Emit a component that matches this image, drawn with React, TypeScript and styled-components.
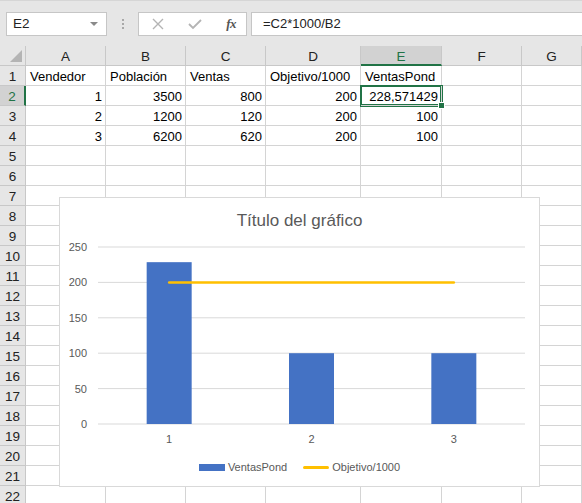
import React from 'react';
import styled, { createGlobalStyle } from 'styled-components';

const GlobalStyle = createGlobalStyle`
	html, body {
		margin: 0;
		padding: 0;
		background: #ffffff;
		overflow: hidden;
	}
	body {
		font-family: 'Liberation Sans', Arial, sans-serif;
	}
`;

const columnas = ['A', 'B', 'C', 'D', 'E', 'F', 'G'];
const filas: (string | number)[][] = [
	['Vendedor', 'Población', 'Ventas', 'Objetivo/1000', 'VentasPond', '', ''],
	[1, 3500, 800, 200, '228,571429', '', ''],
	[2, 1200, 120, 200, 100, '', ''],
	[3, 6200, 620, 200, 100, '', ''],
];
const totalFilas = 22;

// datos del grafico
const ventasPond = [228.571429, 100, 100];
const objetivo = 200;

const Page = styled.div`
	width: 582px;
	height: 503px;
	overflow: hidden;
	background: #ffffff;
`;

const Toolbar = styled.div`
	height: 46px;
	background: #e6e6e6;
	border-top: 1px solid #d6d6d6;
	box-sizing: border-box;
	display: flex;
	align-items: center;
	padding-left: 6px;
`;

const NameBox = styled.div`
	width: 101px;
	height: 24px;
	box-sizing: border-box;
	background: #ffffff;
	border: 1px solid #c6c6c6;
	display: flex;
	align-items: center;
	justify-content: space-between;
	padding: 0 6px 0 6px;
	font-size: 13.5px;
	color: #222;
`;

const DropArrow = styled.span`
	width: 0;
	height: 0;
	border-left: 4px solid transparent;
	border-right: 4px solid transparent;
	border-top: 4px solid #8a8a8a;
	margin-right: 2px;
`;

const Dots = styled.div`
	width: 31px;
	display: flex;
	flex-direction: column;
	align-items: center;
	gap: 2px;

	span {
		width: 2px;
		height: 2px;
		background: #a8a8a8;
	}
`;

const ButtonsBox = styled.div`
	width: 109px;
	height: 24px;
	box-sizing: border-box;
	background: #ffffff;
	border: 1px solid #c6c6c6;
	display: flex;
	align-items: center;
	justify-content: space-between;
	padding: 0 10px 0 13px;
`;

const FxLabel = styled.span`
	font-family: 'Liberation Serif', 'Times New Roman', serif;
	font-style: italic;
	font-weight: bold;
	font-size: 13px;
	color: #555;
	letter-spacing: -0.5px;
`;

const FormulaInput = styled.div`
	flex: 1;
	height: 24px;
	margin-left: 4px;
	box-sizing: border-box;
	background: #ffffff;
	border: 1px solid #c6c6c6;
	border-right: none;
	display: flex;
	align-items: center;
	padding-left: 11px;
	font-size: 13px;
	color: #222;
`;

const Sheet = styled.div`
	position: relative;
`;

const Grid = styled.div`
	display: grid;
	grid-template-columns: 26px 80px 80px 80px 95px 81px 80px 1fr;
	grid-auto-rows: 20px;
	font-size: 13px;
`;

const HeaderCell = styled.div<{ $sel?: boolean }>`
	box-sizing: border-box;
	background: ${(p) => (p.$sel ? '#d2d2d2' : '#e6e6e6')};
	color: ${(p) => (p.$sel ? '#217346' : '#222')};
	border-right: 1px solid #c8c8c8;
	border-bottom: ${(p) => (p.$sel ? '2px solid #217346' : '1px solid #c8c8c8')};
	display: flex;
	align-items: center;
	justify-content: center;
	padding-top: 2px;
	font-size: 13.5px;
`;

const Corner = styled.div`
	box-sizing: border-box;
	background: #e6e6e6;
	border-right: 1px solid #c8c8c8;
	border-bottom: 1px solid #c8c8c8;
	display: flex;
	align-items: flex-end;
	justify-content: flex-end;
	padding: 0 3px 3px 0;

	span {
		width: 0;
		height: 0;
		border-left: 12px solid transparent;
		border-bottom: 12px solid #b4b4b4;
	}
`;

const RowHeader = styled.div<{ $sel?: boolean }>`
	box-sizing: border-box;
	background: ${(p) => (p.$sel ? '#d2d2d2' : '#e6e6e6')};
	color: ${(p) => (p.$sel ? '#217346' : '#222')};
	border-bottom: 1px solid #c8c8c8;
	border-right: ${(p) => (p.$sel ? '2px solid #217346' : '1px solid #c8c8c8')};
	display: flex;
	align-items: center;
	justify-content: center;
	padding-top: 2px;
	font-size: 13.5px;
`;

const Cell = styled.div<{ $num?: boolean; $sel?: boolean }>`
	position: relative;
	z-index: ${(p) => (p.$sel ? 1 : 0)};
	box-sizing: border-box;
	border-right: 1px solid #d4d4d4;
	border-bottom: 1px solid #d4d4d4;
	display: flex;
	align-items: center;
	justify-content: ${(p) => (p.$num ? 'flex-end' : 'flex-start')};
	padding: 2px 3px 0 4px;
	color: #000;
	white-space: nowrap;
	box-shadow: ${(p) => (p.$sel ? '0 0 0 1px #217346, inset 0 0 0 1px #217346' : 'none')};

	${(p) =>
		p.$sel &&
		`
		&::after {
			content: '';
			position: absolute;
			right: -4px;
			bottom: -4px;
			width: 5px;
			height: 5px;
			background: #217346;
			border: 1px solid #ffffff;
		}
	`}
`;

const ChartBox = styled.div`
	position: absolute;
	z-index: 2;
	left: 59px;
	top: 151px;
	width: 481px;
	height: 290px;
	box-sizing: border-box;
	background: #ffffff;
	border: 1px solid #d9d9d9;
	display: flex;
	flex-direction: column;
	font-family: 'Liberation Sans', Arial, sans-serif;
	color: #595959;
`;

const ChartTitle = styled.div`
	height: 42px;
	display: flex;
	align-items: center;
	justify-content: center;
	padding-top: 3px;
	box-sizing: border-box;
	font-size: 17px;
	color: #595959;
`;

const Legend = styled.div`
	flex: 1;
	display: flex;
	align-items: center;
	justify-content: center;
	gap: 16px;
	font-size: 11px;
	padding-bottom: 2px;
`;

const LegendItem = styled.div`
	display: flex;
	align-items: center;
	gap: 3px;
`;

const Swatch = styled.span<{ $color: string; $h: number }>`
	display: inline-block;
	width: 26px;
	height: ${(p) => p.$h}px;
	background: ${(p) => p.$color};
	border-radius: ${(p) => (p.$h < 4 ? '2px' : '0')};
`;

const Plot = () => {
	const top = 7;
	const bottom = 184;
	const left = 38;
	const right = 465;
	const escala = (bottom - top) / 250;
	const ancho = (right - left) / 3;
	const centros = [0, 1, 2].map((i) => left + ancho * i + ancho / 2);
	const yLinea = bottom - objetivo * escala;

	return (
		<svg width={479} height={210} style={{ display: 'block' }}>
			{[0, 50, 100, 150, 200, 250].map((v) => {
				const y = bottom - v * escala;
				return (
					<g key={v}>
						<line x1={left} x2={right} y1={y} y2={y} stroke="#d9d9d9" strokeWidth={1} />
						<text x={27} y={y + 4} textAnchor="end" fontSize={11} fill="#595959" fontFamily="Liberation Sans, Arial, sans-serif">
							{v}
						</text>
					</g>
				);
			})}
			{ventasPond.map((v, i) => (
				<rect key={i} x={centros[i] - 22.5} y={bottom - v * escala} width={45} height={v * escala} fill="#4472c4" />
			))}
			<line x1={centros[0]} x2={centros[2]} y1={yLinea} y2={yLinea} stroke="#ffc000" strokeWidth={2.5} strokeLinecap="round" />
			{centros.map((c, i) => (
				<text key={i} x={c} y={203} textAnchor="middle" fontSize={11} fill="#595959" fontFamily="Liberation Sans, Arial, sans-serif">
					{i + 1}
				</text>
			))}
		</svg>
	);
};

const App = () => {
	return (
		<>
			<GlobalStyle />
			<Page>
				<Toolbar>
					<NameBox>
						E2
						<DropArrow />
					</NameBox>
					<Dots>
						<span></span>
						<span></span>
						<span></span>
					</Dots>
					<ButtonsBox>
						<svg width={12} height={12} viewBox="0 0 12 12">
							<path d="M1 1 L11 11 M11 1 L1 11" stroke="#b4b4b4" strokeWidth={1.4} />
						</svg>
						<svg width={14} height={12} viewBox="0 0 14 12">
							<path d="M1 6 L5 10 L13 2" stroke="#b4b4b4" strokeWidth={1.8} fill="none" />
						</svg>
						<FxLabel>fx</FxLabel>
					</ButtonsBox>
					<FormulaInput>=C2*1000/B2</FormulaInput>
				</Toolbar>

				<Sheet>
					<Grid>
						<Corner>
							<span></span>
						</Corner>
						{columnas.map((c) => (
							<HeaderCell key={c} $sel={c === 'E'}>
								{c}
							</HeaderCell>
						))}

						{Array.from({ length: totalFilas }).map((_, r) => {
							const datos = filas[r] || ['', '', '', '', '', '', ''];
							return (
								<React.Fragment key={r}>
									<RowHeader $sel={r === 1}>{r + 1}</RowHeader>
									{datos.map((v, c) => (
										<Cell key={c} $num={r > 0 && v !== ''} $sel={r === 1 && c === 4}>
											{v}
										</Cell>
									))}
								</React.Fragment>
							);
						})}
					</Grid>

					<ChartBox>
						<ChartTitle>Título del gráfico</ChartTitle>
						<Plot />
						<Legend>
							<LegendItem>
								<Swatch $color="#4472c4" $h={7} />
								VentasPond
							</LegendItem>
							<LegendItem>
								<Swatch $color="#ffc000" $h={3} />
								Objetivo/1000
							</LegendItem>
						</Legend>
					</ChartBox>
				</Sheet>
			</Page>
		</>
	);
};

export default App;
